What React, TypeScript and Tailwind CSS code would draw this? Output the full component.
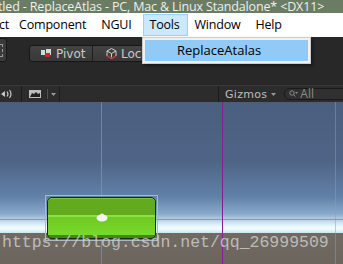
import React from "react";

function PivotIcon() {
  return (
    <svg width="10" height="9" viewBox="0 0 10 9">
      <rect x="0" y="1" width="4" height="5" fill="#d8d8d8" />
      <rect x="5" y="0" width="5" height="6" fill="#d8d8d8" />
      <rect x="4" y="4" width="5" height="4" fill="#d0262a" />
    </svg>
  );
}

function LocalIcon() {
  return (
    <svg width="11" height="11" viewBox="0 0 11 11">
      <path d="M5.5 0.5 L10 3 L10 8 L5.5 10.5 L1 8 L1 3 Z" fill="none" stroke="#cfcfcf" strokeWidth="1" />
      <path d="M1 3 L5.5 5.5 L10 3 M5.5 5.5 L5.5 10.5" fill="none" stroke="#cfcfcf" strokeWidth="1" />
      <path d="M1 8 Q5.5 12 10 8" fill="none" stroke="#d0262a" strokeWidth="1.5" />
    </svg>
  );
}

export default function App() {
  return (
    <div className="relative w-[343px] h-[264px] overflow-hidden bg-[#282828]">
      {/* title bar */}
      <div className="h-[13px] bg-[#6a7c63] flex items-center overflow-hidden">
        <span className="ml-[-2px] whitespace-nowrap text-[12.5px] tracking-[-0.15px] leading-[13px] text-[#eef0ec] font-['Open_Sans',sans-serif]">
          tled - ReplaceAtlas - PC, Mac &amp; Linux Standalone* &lt;DX11&gt;
        </span>
      </div>
      {/* menu bar */}
      <div className="h-[24px] bg-white flex items-center text-[12.5px] tracking-[-0.2px] text-black font-['Open_Sans',sans-serif] whitespace-nowrap">
        <span className="ml-[-1px]">ct</span>
        <span className="ml-[10px]">Component</span>
        <span className="ml-[15px]">NGUI</span>
        <span className="ml-[11px] h-[22px] w-[45px] pl-[6px] flex items-center bg-[#cce8ff] border border-[#99d1ff]">Tools</span>
        <span className="ml-[7px]">Window</span>
        <span className="ml-[15px]">Help</span>
      </div>
      {/* main toolbar */}
      <div className="h-[48px] bg-[#282828] relative flex items-start pt-[8px]">
        <div className="absolute left-[-6px] top-[1px] w-[13px] h-[24px] rounded-[3px] border border-[#171717] bg-[#3a3a3a]">
          <div className="absolute left-[2px] top-[5px] w-[6px] h-[13px] border border-dashed border-[#9a9a9a]" />
        </div>
        <div className="ml-[29px] flex h-[17px] rounded-[3px] border border-[#171717] bg-gradient-to-b from-[#444] to-[#383838] text-[12px] text-[#c9c9c9] font-['DejaVu_Sans',sans-serif] leading-none overflow-hidden">
          <div className="w-[63px] flex items-center pl-[11px] gap-[5px] border-r border-[#1e1e1e]">
            <PivotIcon />
            <span>Pivot</span>
          </div>
          <div className="w-[60px] flex items-center pl-[13px] gap-[4px]">
            <LocalIcon />
            <span>Local</span>
          </div>
        </div>
      </div>
      {/* scene toolbar */}
      <div className="h-[17px] bg-[#2c2c2c] border-t border-[#3a3a3a] flex items-center text-[11px] font-['DejaVu_Sans',sans-serif] text-[#bdbdbd] leading-none overflow-hidden">
        <svg width="16" height="10" viewBox="0 0 16 10" className="shrink-0">
          <path d="M1 5 L5 2 L5 8 Z" fill="#c8c8c8" />
          <path d="M7 2.5 Q9 5 7 7.5" fill="none" stroke="#c8c8c8" strokeWidth="1.2" />
          <path d="M9.5 1 Q12.5 5 9.5 9" fill="none" stroke="#c8c8c8" strokeWidth="1.2" />
        </svg>
        <div className="ml-[5px] w-px h-[16px] bg-[#1c1c1c] shrink-0" />
        <svg width="12" height="8" viewBox="0 0 12 8" className="ml-[7px] shrink-0">
          <rect x="0" y="0" width="12" height="8" fill="#bdbdbd" />
          <path d="M1 7 L3 3 L5 4 L7 2 L9 4 L11 3 L11 7 Z" fill="#222" />
        </svg>
        <div className="ml-[6px] w-px h-[10px] bg-[#505050] shrink-0" />
        <svg width="5" height="3" viewBox="0 0 5 3" className="ml-[3px] shrink-0">
          <path d="M0 0 L5 0 L2.5 3 Z" fill="#9a9a9a" />
        </svg>
        <div className="ml-[3px] w-px h-[16px] bg-[#1c1c1c] shrink-0" />
        <div className="ml-[158px] w-px h-[16px] bg-[#1c1c1c] shrink-0" />
        <span className="ml-[6px] text-[11px] tracking-[0.3px] shrink-0">Gizmos</span>
        <svg width="5" height="3" viewBox="0 0 5 3" className="ml-[4px] shrink-0">
          <path d="M0 0 L5 0 L2.5 3 Z" fill="#9a9a9a" />
        </svg>
        <div className="ml-[8px] w-[70px] h-[12px] shrink-0 rounded-l-full border border-[#1a1a1a] bg-[#303030] flex items-center pl-[4px] text-[#8a8a8a] text-[12px] font-['Open_Sans',sans-serif]">
          <svg width="10" height="8" viewBox="0 0 10 8">
            <circle cx="3" cy="3" r="2.2" fill="none" stroke="#8a8a8a" strokeWidth="1" />
            <path d="M4.5 4.5 L6.5 6.5" stroke="#8a8a8a" strokeWidth="1" />
            <path d="M6 2 L9 2 L7.5 4 Z" fill="#8a8a8a" />
          </svg>
          <span className="ml-[1px]">All</span>
        </div>
      </div>
      {/* scene view */}
      <div className="relative h-[162px] bg-[linear-gradient(to_bottom,#4a5e7f_0px,#4f6587_60px,#6281a8_95px,#8aaacb_112px,#b8d3e6_118px,#e8f8fc_124px,#f2fdff_127px,#c6e6ee_131px,#706a63_131px,#6b655e_162px)] overflow-hidden">
        <div className="absolute left-[101px] top-0 bottom-0 w-px bg-[#8d9cb4] opacity-60" />
        <div className="absolute left-[335px] top-0 bottom-0 w-px bg-[#8d9cb4] opacity-50" />
        <div className="absolute left-0 right-0 top-[117px] h-px bg-[#8f98a6]" />
        <div className="absolute left-[222px] top-0 bottom-0 w-px bg-[#8a1c93]" />
        {/* green button */}
        <div className="absolute left-[45px] top-[93px] w-[113px] h-[46px] border border-[#a9b7cc]">
          <div className="absolute inset-[1px] rounded-[5px] border border-[#1d2a12] bg-[#3f8a13] overflow-hidden">
            <div className="h-[17px] bg-[#63aa1f] rounded-t-[4px] border-t border-[#7cc23a]" />
            <div className="h-[2px] bg-[#8ee23f]" />
            <div className="h-[18px] bg-[linear-gradient(to_bottom,#6fc923,#79d92a)]" />
          </div>
          <svg width="14" height="10" viewBox="0 0 14 10" className="absolute left-[49px] top-[17px]">
            <ellipse cx="7" cy="5" rx="5.5" ry="3.5" fill="#f4f4f4" />
            <ellipse cx="7" cy="2.5" rx="2" ry="2" fill="#f4f4f4" />
          </svg>
        </div>
        {/* watermark */}
        <div className="absolute left-[2px] top-[133px] whitespace-nowrap text-[16.5px] leading-none text-[#d0d0d0] opacity-80 font-['Liberation_Mono',monospace]">
          https://blog.csdn.net/qq_26999509
        </div>
      </div>
      {/* dropdown */}
      <div className="absolute left-[142px] top-[37px] w-[169px] h-[27px] bg-[#f0f0f0] border border-[#cccccc] shadow-[2px_2px_3px_rgba(0,0,0,0.4)] p-[2px]">
        <div className="h-full bg-[#91c9f7] flex items-center pl-[32px] text-[13px] text-black font-['Open_Sans',sans-serif]">
          ReplaceAtalas
        </div>
      </div>
    </div>
  );
}
